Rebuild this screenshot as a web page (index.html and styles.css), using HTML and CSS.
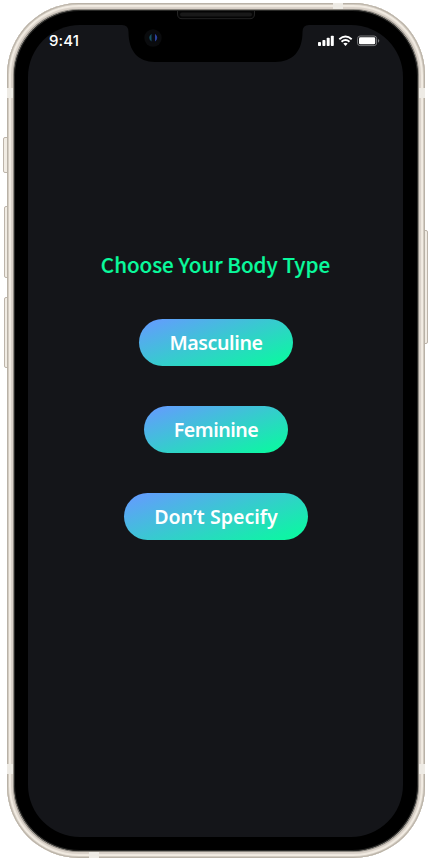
FILE: index.html
```html
<!DOCTYPE html>
<html lang="en">
<head>
<meta charset="utf-8">
<title>Choose Your Body Type</title>
<link rel="stylesheet" href="styles.css">
</head>
<body>
<div class="phone">
  <i class="key mute"></i><i class="key vol-up"></i><i class="key vol-down"></i><i class="key power"></i>
  <div class="frame">
    <i class="band band-lt"></i><i class="band band-rt"></i><i class="band band-lb"></i><i class="band band-rb"></i><i class="band band-top"></i><i class="band band-bottom"></i>
    <div class="bezel">
      <main class="screen">
        <header class="status">
          <span class="time">9:41</span>
          <svg class="indicators" width="62" height="12" viewBox="0 0 62 12" fill="#fff">
            <rect x="0" y="7" width="3" height="4" rx=".8"/><rect x="4.4" y="5" width="3" height="6" rx=".8"/><rect x="8.7" y="2.8" width="3" height="8.2" rx=".8"/><rect x="12.8" y=".8" width="3" height="10.2" rx=".8"/>
            <g fill="none" stroke="#fff" stroke-width="1.9"><path d="M21.3 4.2Q27.5-1.2 33.7 4.2"/><path d="M23.5 6.7Q27.5 3.2 31.5 6.7"/></g>
            <path d="M25.3 8.6Q27.5 6.9 29.7 8.6L27.5 10.9Z"/>
            <rect x="39.6" y="1" width="19" height="9.6" rx="2.5" fill="none" stroke="#77787b"/>
            <rect x="41" y="2.3" width="16.2" height="7" rx="1.3"/>
            <path d="M60 4v3.7Q61.3 7 61.3 5.85T60 4Z" fill="#77787b"/>
          </svg>
        </header>
        <h1>Choose Your Body Type</h1>
        <div class="choices">
          <button class="masculine"><span>Masculine</span></button>
          <button class="feminine"><span>Feminine</span></button>
          <button class="unspecified"><span>Don’t Specify</span></button>
        </div>
      </main>
    </div>
    <svg class="notch" width="182" height="53" viewBox="0 0 182 53">
      <path d="M1 15Q7.500 15 7.500 22C7.500 41 17 52 34 52H154C172 52 181.500 41 181.500 22Q181.500 15 188 15V2H1Z"/>
      <path d="M56.5 1V4Q56.5 8.7 61 8.7H129Q133.500 8.700 133.500 4V1" fill="#050505" stroke="#242424"/>
      <rect x="59" y="2.500" width="72" height="4" rx="2" fill="#191919"/>
      <circle cx="32" cy="28" r="8.700" fill="#0a0b0d"/>
      <circle cx="32" cy="28" r="4.500" fill="#080b12"/>
      <path d="M30.500 23.800Q26 28 30.500 31.500Z" fill="#185260"/><path d="M34 23.800Q38.500 28 34 31.500Z" fill="#2c419b"/>
    </svg>
  </div>
</div>
</body>
</html>
```
FILE: styles.css
```css
* { box-sizing: border-box; }
body { margin: 0; background: #fff; }
.phone { position: relative; width: 431px; height: 862px; padding: 3px 6px 4px 7px; overflow: hidden; }
.frame {
  position: relative; width: 418px; height: 855px; padding: 7px; border-radius: 72px;
  background: #e4ddd4;
  box-shadow: inset 0 0 0 1px #b9b2a7, inset 0 0 0 2px #d3ccc2, inset 0 0 1px 4px #f2ece3, inset 0 0 0 6px #d8d0c7, inset 0 0 0 7px #8b8780;
}
.bezel { height: 841px; padding: 15px 14px; border-radius: 66px; background: #000; box-shadow: inset 0 0 0 1px #292927; }
.screen {
  display: flex; flex-direction: column; align-items: center;
  width: 375px; height: 812px; border-radius: 52px; background: #141519;
}
.status { display: flex; justify-content: space-between; width: 100%; padding: 7px 23px 0 21px; height: 224px; }
.time { font: 500 15px/18px Inter, sans-serif; color: #fff; letter-spacing: .1px; }
.indicators { margin-top: 3px; }
h1 { margin: 0; height: 30px; font: 500 20.6px/30px "Noto Sans CJK SC", sans-serif; color: #0afa9d; white-space: nowrap; -webkit-text-stroke: .15px #0afa9d; }
.choices { display: flex; flex-direction: column; align-items: center; gap: 40px; margin: 40px 0 0 1px; }
button {
  height: 47px; padding: 0; border: 0; border-radius: 24px; color: #fff;
  background: linear-gradient(160deg, #659bff 3%, #08fb9e 97%);
  font: 600 19.6px/46px "Noto Sans", sans-serif; white-space: nowrap;
}
.masculine { width: 154px; letter-spacing: -.4px; }
.feminine { width: 144px; letter-spacing: -.5px; }
.unspecified { width: 184px; }
.key { position: absolute; width: 6px; background: #f1ece4; border: 1px solid #bcb4aa; border-radius: 2px; }
.mute { left: 3px; top: 137px; height: 36px; }
.vol-up { left: 4px; top: 206px; height: 72px; }
.vol-down { left: 4px; top: 297px; height: 71px; }
.power { left: 420px; top: 230px; width: 8px; height: 114px; }
.band { position: absolute; width: 6px; height: 10px; background: #eeebe5; }
.band-lt { left: 0; top: 85px; }
.band-rt { right: 0; top: 85px; }
.band-lb { left: 0; top: 761px; }
.band-rb { right: 0; top: 761px; }
.band-top { left: 326px; top: 0; width: 10px; height: 6px; }
.band-bottom { left: 82px; bottom: 0; width: 10px; height: 6px; }
.notch { position: absolute; left: 114px; top: 7px; overflow: visible; }
```
